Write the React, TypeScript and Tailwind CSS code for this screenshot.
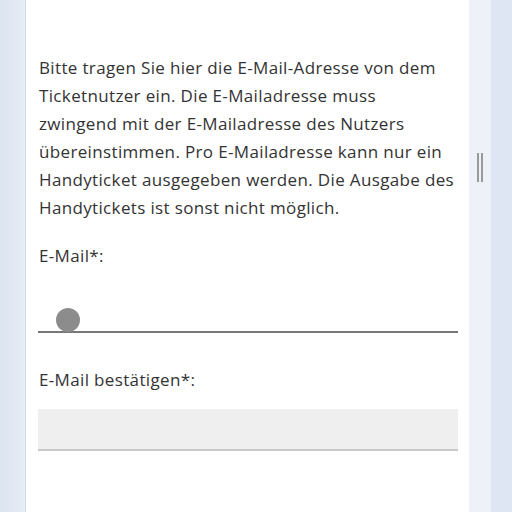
export default function App() {
    return (
        <div className="flex h-[512px] w-[512px] overflow-hidden bg-[#dfe6f2]" style={{ fontFamily: '"Open Sans", Lato, sans-serif' }}>
            <div className="w-[26px] shrink-0 bg-gradient-to-r from-[#dde5f1] to-[#e6ecf5] border-r border-[#d3dbe7]" />
            <div className="flex-1 bg-white pl-[12px] pr-[11px] pt-[54px] text-[#333333] tracking-[0.35px]">
                <p className="whitespace-nowrap pl-px text-[17px] leading-[28px]">
                    Bitte tragen Sie hier die E-Mail-Adresse von dem
                    <br />
                    Ticketnutzer ein. Die E-Mailadresse muss
                    <br />
                    zwingend mit der E-Mailadresse des Nutzers
                    <br />
                    übereinstimmen. Pro E-Mailadresse kann nur ein
                    <br />
                    Handyticket ausgegeben werden. Die Ausgabe des
                    <br />
                    Handytickets ist sonst nicht möglich.
                </p>

                <label className="mt-[20px] block pl-px text-[17px] leading-[28px]">E-Mail*:</label>
                <div className="relative mt-[61px] h-[2px] bg-[#777777]">
                    <span className="absolute left-[18px] top-[-23px] h-[24px] w-[24px] rounded-full bg-[#8c8c8c]" />
                </div>

                <label className="mt-[33px] block pl-px text-[17px] leading-[28px]">E-Mail bestätigen*:</label>
                <div className="mt-[15px] h-[42px] border-b-2 border-[#c9c9c9] bg-[#efefef]" />
            </div>
            <div className="relative w-[22px] shrink-0 bg-[#eef2f8]">
                <span className="absolute left-[8px] top-[153px] h-[29px] w-[2px] bg-[#9a9a9a]" />
                <span className="absolute left-[12px] top-[153px] h-[29px] w-[2px] bg-[#9a9a9a]" />
            </div>
            <div className="w-[21px] shrink-0 bg-[#dfe6f3]" />
        </div>
    );
}
